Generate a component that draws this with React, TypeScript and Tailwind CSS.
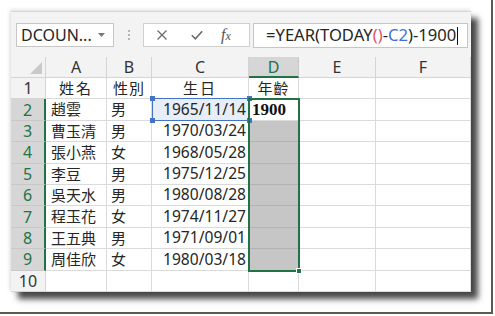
const font = "font-['Noto_Sans','Noto_Sans_CJK_TC',sans-serif]";

const colHeads = ["A", "B", "C", "D", "E", "F"];

const rows: string[][] = [
  ["姓名", "性別", "生日", "年齡"],
  ["趙雲", "男", "1965/11/14", "1900"],
  ["曹玉清", "男", "1970/03/24"],
  ["張小燕", "女", "1968/05/28"],
  ["李豆", "男", "1975/12/25"],
  ["吳天水", "男", "1980/08/28"],
  ["程玉花", "女", "1974/11/27"],
  ["王五典", "男", "1971/09/01"],
  ["周佳欣", "女", "1980/03/18"],
  [],
];

function FormulaBar() {
  return (
    <div className="flex h-[46px] items-start border-t border-[#d6d6d6] pt-[11px] pl-[5px]">
      <div className="flex h-[24px] w-[98px] items-center justify-between border border-[#c6c6c6] bg-white pl-[4px] pr-[8px]">
        <span className="text-[16px] text-[#262626]">DCOUN...</span>
        <svg width="7" height="4" viewBox="0 0 7 4">
          <path d="M0 0h7L3.5 4z" fill="#777" />
        </svg>
      </div>
      <div className="ml-[14px] mt-[7px] flex flex-col gap-[2px]">
        <span className="h-[2px] w-[2px] bg-[#b5b5b5]" />
        <span className="h-[2px] w-[2px] bg-[#b5b5b5]" />
        <span className="h-[2px] w-[2px] bg-[#b5b5b5]" />
      </div>
      <div className="ml-[13px] flex h-[24px] w-[107px] items-center border border-[#d0d0d0] bg-white">
        <svg className="ml-[13px]" width="10" height="10" viewBox="0 0 10 10">
          <path d="M0.5 0.5l9 9M9.5 0.5l-9 9" stroke="#6a6a6a" strokeWidth="1.3" />
        </svg>
        <svg className="ml-[24px]" width="12" height="10" viewBox="0 0 12 10">
          <path d="M0.8 5.2l3.6 3.6L11.2 1.2" stroke="#6a6a6a" strokeWidth="1.6" fill="none" />
        </svg>
        <span className="ml-[18px] font-['Liberation_Serif',serif] text-[16px] italic text-[#555]">
          f<span className="text-[12px]">x</span>
        </span>
      </div>
      <div className="ml-[3px] flex h-[25px] w-[215px] items-center border border-[#c6c6c6] bg-white pl-[12px]">
        <span className="text-[16.6px] text-[#262626]">
          =YEAR(TODAY<span className="text-[#e0506e]">()</span>-<span className="text-[#3d72d6]">C2</span>)-1900
        </span>
        <span className="ml-[1px] h-[18px] w-[1px] bg-[#111]" />
      </div>
    </div>
  );
}

function Grid() {
  return (
    <div className="relative">
      <div className="grid grid-cols-[35px_61px_45px_97px_50px_77px_95px] grid-rows-[21px_repeat(10,21.4px)] text-[#262626]">
        <div className="relative border-r border-b border-[#d4d4d4] bg-[#f3f3f3]">
          <svg className="absolute right-[3px] bottom-[3px]" width="12" height="12" viewBox="0 0 12 12">
            <path d="M12 0v12H0z" fill="#c9c9c9" />
          </svg>
        </div>
        {colHeads.map((c) =>
          c === "D" ? (
            <div
              key={c}
              className="flex items-center justify-center border-r border-b-2 border-r-[#c8c8c8] border-b-[#217346] bg-[#d6d6d6] text-[16px] text-[#217346]"
            >
              {c}
            </div>
          ) : (
            <div
              key={c}
              className="flex items-center justify-center border-r border-b border-[#d4d4d4] bg-[#f3f3f3] text-[16px] text-[#333]"
            >
              {c}
            </div>
          )
        )}
        {rows.map((r, i) => {
          const sel = i >= 1 && i <= 8;
          return [
            <div
              key={`h${i}`}
              className={
                sel
                  ? "flex items-center justify-center border-b border-r-2 border-b-[#c8c8c8] border-r-[#217346] bg-[#d6d6d6] text-[16px] text-[#217346]"
                  : "flex items-center justify-center border-r border-b border-[#d4d4d4] bg-[#f3f3f3] text-[16px] text-[#333]"
              }
            >
              {i + 1}
            </div>,
            <div
              key={`a${i}`}
              className={
                i === 0
                  ? "flex items-center justify-center border-r border-b border-[#dadada] bg-white text-[15px] tracking-[2px]"
                  : "flex items-center border-r border-b border-[#dadada] bg-white pl-[5px] text-[15px]"
              }
            >
              {r[0]}
            </div>,
            <div
              key={`b${i}`}
              className={
                i === 0
                  ? "flex items-center justify-center border-r border-b border-[#dadada] bg-white text-[15px] tracking-[1px]"
                  : "flex items-center border-r border-b border-[#dadada] bg-white pl-[4px] text-[15px]"
              }
            >
              {r[1]}
            </div>,
            <div
              key={`c${i}`}
              className={
                i === 0
                  ? "flex items-center justify-center border-r border-b border-[#dadada] bg-white text-[15px] tracking-[2px]"
                  : i === 1
                  ? "flex items-center justify-end border-r border-b border-[#dadada] bg-[#e7eef8] pr-[2px] text-[15.6px]"
                  : "flex items-center justify-end border-r border-b border-[#dadada] bg-white pr-[2px] text-[15.6px]"
              }
            >
              {r[2]}
            </div>,
            <div
              key={`d${i}`}
              className={
                i === 0
                  ? "flex items-center justify-center border-r border-b border-[#dadada] bg-white text-[15px] tracking-[1px]"
                  : i === 1
                  ? "flex items-center border-r border-b border-[#dadada] bg-white pl-[3px] font-['Liberation_Serif',serif] text-[17px] font-bold text-[#111]"
                  : sel
                  ? "border-r border-b border-[#b4b4b4] bg-[#c6c6c6]"
                  : "border-r border-b border-[#dadada] bg-white"
              }
            >
              {r[3]}
            </div>,
            <div key={`e${i}`} className="border-r border-b border-[#dadada] bg-white" />,
            <div key={`f${i}`} className="border-r border-b border-[#dadada] bg-white" />,
          ];
        })}
      </div>
      {/* C2 reference highlight */}
      <div className="pointer-events-none absolute top-[41.4px] left-[140.5px] h-[22.4px] w-[98px] border-[1.5px] border-[#4472c4]">
        <span className="absolute -top-[3px] -left-[3px] h-[5px] w-[5px] bg-[#4472c4]" />
        <span className="absolute -top-[3px] -right-[3px] h-[5px] w-[5px] bg-[#4472c4]" />
        <span className="absolute -bottom-[3px] -left-[3px] h-[5px] w-[5px] bg-[#4472c4]" />
        <span className="absolute -right-[3px] -bottom-[3px] h-[5px] w-[5px] bg-[#4472c4]" />
      </div>
      {/* D2:D9 selection */}
      <div className="pointer-events-none absolute top-[41.4px] left-[237px] h-[173.2px] w-[52px] border-2 border-[#217346]">
        <span className="absolute -right-[4px] -bottom-[4px] h-[6px] w-[6px] border border-white bg-[#217346]" />
      </div>
    </div>
  );
}

export default function App() {
  return (
    <div className={`h-[316px] w-[495px] bg-white ${font}`}>
      <div className="h-[314px] w-[493px] border-r-2 border-b-2 border-[#5b5b50] pt-[11px] pl-[11px]">
        <div className="h-[281px] w-[460px] overflow-hidden bg-[#f3f3f3] shadow-[7px_7px_6px_rgba(0,0,0,0.72),-1px_-1px_4px_rgba(0,0,0,0.15)]">
          <FormulaBar />
          <Grid />
        </div>
      </div>
    </div>
  );
}
